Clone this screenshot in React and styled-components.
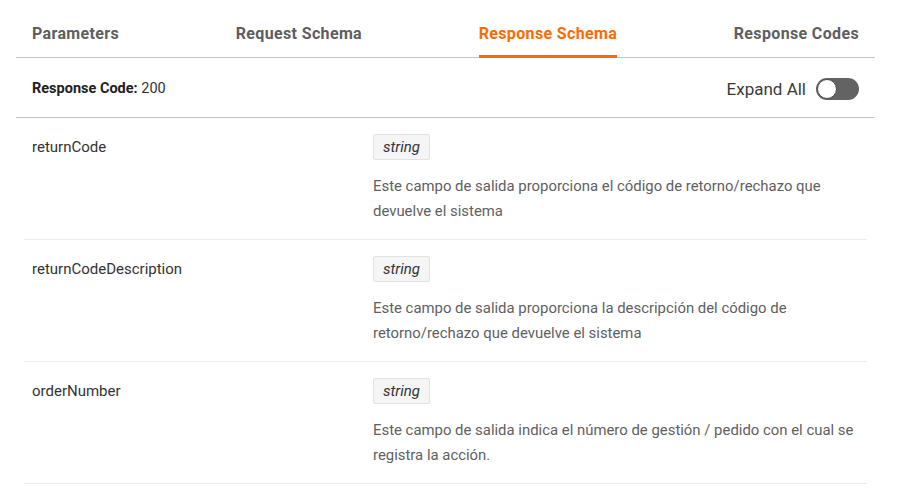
import React from "react";
import styled, { createGlobalStyle } from "styled-components";

const GlobalStyle = createGlobalStyle`
  body {
    margin: 0;
    background: #ffffff;
    font-family: Roboto, "Liberation Sans", Arial, sans-serif;
  }
`;

const Page = styled.div`
  width: 859px;
  margin-left: 16px;
`;

const TabBar = styled.div`
  display: flex;
  justify-content: space-between;
  align-items: flex-end;
  padding: 0 16px;
  height: 58px;
  border-bottom: 1px solid #c4c4c4;
  box-sizing: border-box;
`;

const Tab = styled.div`
  font-size: 16px;
  font-weight: 700;
  letter-spacing: 0.35px;
  color: ${(p) => (p.active ? "#ff6a00" : "#5e5e5e")};
  padding-bottom: 12px;
  border-bottom: 3px solid ${(p) => (p.active ? "#ff6a00" : "transparent")};
  margin-bottom: -1px;
  line-height: 18px;
`;

const CodeBar = styled.div`
  display: flex;
  justify-content: space-between;
  align-items: center;
  height: 60px;
  padding: 2px 16px 0;
  border-bottom: 1px solid #c4c4c4;
  box-sizing: border-box;
`;

const CodeLabel = styled.div`
  font-size: 14.5px;
  color: #333;
  b {
    font-weight: 700;
    color: #222;
  }
`;

const ExpandWrap = styled.div`
  display: flex;
  align-items: center;
  gap: 10px;
  font-size: 17px;
  color: #3a3a3a;
`;

const Toggle = styled.div`
  width: 43px;
  height: 22px;
  border-radius: 11px;
  background: #636363;
  display: flex;
  align-items: center;
  padding: 0 2px 0 1px;
  box-sizing: border-box;
`;

const Knob = styled.div`
  width: 20px;
  height: 20px;
  border-radius: 50%;
  background: #fff;
  box-sizing: border-box;
  border: 1.5px solid #4a4a4a;
`;

const Row = styled.div`
  display: grid;
  grid-template-columns: 341px 1fr;
  margin: 0 8px;
  padding: 16px 8px 14px;
  border-bottom: 1px solid #ececec;
  height: 122px;
  box-sizing: border-box;
`;

const FieldName = styled.div`
  font-size: 15px;
  color: #333;
  line-height: 27px;
`;

const Details = styled.div`
  display: flex;
  flex-direction: column;
  align-items: flex-start;
`;

const TypeTag = styled.span`
  font-size: 15px;
  font-style: italic;
  color: #333;
  background: #f5f5f5;
  border: 1px solid #e2e2e2;
  border-radius: 2px;
  padding: 0 9px;
  line-height: 24px;
`;

const Description = styled.p`
  margin: 14px 0 0;
  font-size: 14.9px;
  line-height: 25px;
  color: #5f5f5f;
  max-width: 487px;
`;

const fields = [
  {
    name: "returnCode",
    type: "string",
    desc: "Este campo de salida proporciona el código de retorno/rechazo que devuelve el sistema",
  },
  {
    name: "returnCodeDescription",
    type: "string",
    desc: "Este campo de salida proporciona la descripción del código de retorno/rechazo que devuelve el sistema",
  },
  {
    name: "orderNumber",
    type: "string",
    desc: "Este campo de salida indica el número de gestión / pedido con el cual se registra la acción.",
  },
];

export default function App() {
  return (
    <>
      <GlobalStyle />
      <Page>
        <TabBar>
          <Tab>Parameters</Tab>
          <Tab>Request Schema</Tab>
          <Tab active>Response Schema</Tab>
          <Tab>Response Codes</Tab>
        </TabBar>
        <CodeBar>
          <CodeLabel>
            <b>Response Code:</b> 200
          </CodeLabel>
          <ExpandWrap>
            Expand All
            <Toggle>
              <Knob />
            </Toggle>
          </ExpandWrap>
        </CodeBar>
        {fields.map((f) => (
          <Row key={f.name}>
            <FieldName>{f.name}</FieldName>
            <Details>
              <TypeTag>{f.type}</TypeTag>
              <Description>{f.desc}</Description>
            </Details>
          </Row>
        ))}
      </Page>
    </>
  );
}
